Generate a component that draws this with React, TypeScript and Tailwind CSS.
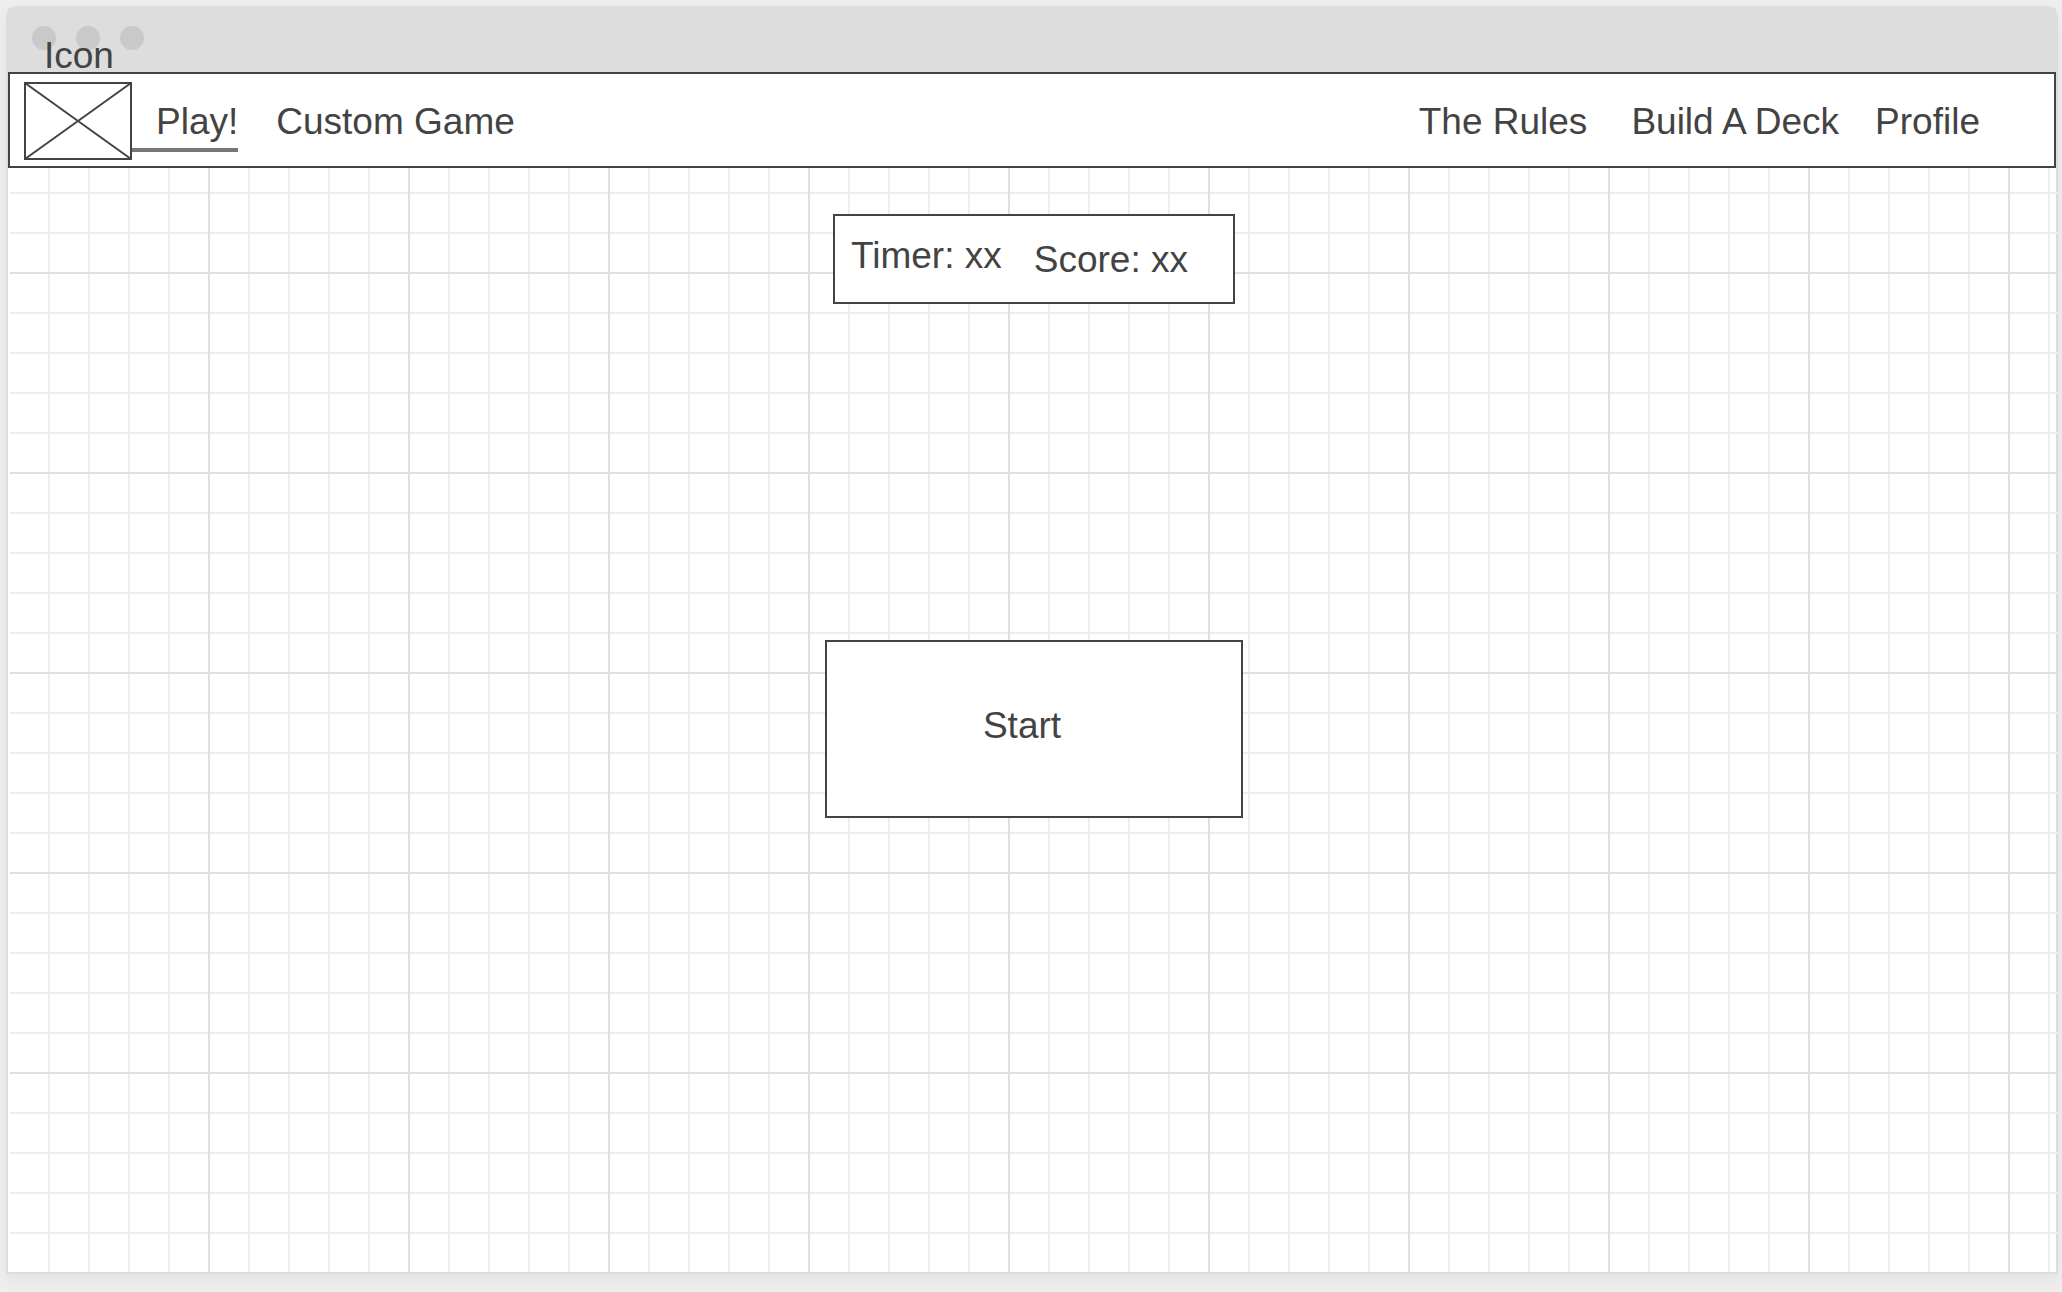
const linkText = "pt-5 leading-10";

function TitleBar() {
  return (
    <div className="relative flex h-16 shrink-0 gap-5 bg-[#dddddd] pl-6 pt-[18px]">
      <span className="size-6 rounded-full bg-[#c9c9c9]" />
      <span className="size-6 rounded-full bg-[#c9c9c9]" />
      <span className="size-6 rounded-full bg-[#c9c9c9]" />
      <span className="absolute -bottom-1 left-9 leading-10">Icon</span>
    </div>
  );
}

function ImagePlaceholder() {
  return (
    <svg
      className="h-[78px] w-[108px] shrink-0"
      viewBox="0 0 108 78"
      fill="none"
      stroke="#434343"
      strokeWidth="2"
      role="img"
      aria-label="Icon"
    >
      <rect x="1" y="1" width="106" height="76" />
      <path d="M1 1L107 77M107 1L1 77" />
    </svg>
  );
}

function NavBar() {
  return (
    <nav className="flex shrink-0 items-start justify-between border-2 border-[#434343] bg-white pb-1.5 pl-3.5 pr-[74px] pt-2">
      <div className="flex items-start">
        <ImagePlaceholder />
        <a href="#play" className="border-b-4 border-[#777777] pb-1.5 pl-6 pt-5 leading-10">
          Play!
        </a>
        <a href="#custom" className={`ml-[38px] ${linkText}`}>
          Custom Game
        </a>
      </div>
      <div className="flex items-start">
        <a href="#rules" className={linkText}>
          The Rules
        </a>
        <a href="#deck" className={`ml-11 ${linkText}`}>
          Build A Deck
        </a>
        <a href="#profile" className={`ml-9 ${linkText}`}>
          Profile
        </a>
      </div>
    </nav>
  );
}

export default function App() {
  return (
    <div className="flex min-h-screen flex-col bg-[#eeeeee] pb-[18px] pl-1.5 pr-1 pt-1.5 font-['Liberation_Sans',Arial,sans-serif] text-[37px] text-[#434343]">
      <div className="flex grow flex-col rounded-t-xl border-2 border-[#dddddd] bg-white shadow-[0_6px_16px_rgba(0,0,0,0.05)]">
        <TitleBar />
        <NavBar />
        <main className="-mr-0.5 ml-0.5 flex grow flex-col items-center bg-[linear-gradient(to_right,#e0e0e0_2px,transparent_2px),linear-gradient(to_bottom,#e0e0e0_2px,transparent_2px),linear-gradient(to_right,#eeeeee_2px,transparent_2px),linear-gradient(to_bottom,#eeeeee_2px,transparent_2px)] bg-[size:200px_200px,200px_200px,40px_40px,40px_40px] bg-[position:198px_0px,0px_104px,38px_0px,0px_24px] pt-[46px]">
          <section className="flex h-[90px] w-[402px] items-start gap-8 border-2 border-[#434343] bg-white pl-4 pt-5 leading-10">
            <p>Timer: xx</p>
            <p className="pt-1">Score: xx</p>
          </section>
          <button
            type="button"
            className="mt-[336px] h-[178px] w-[418px] border-2 border-[#434343] bg-white pb-1.5 pr-6 leading-10"
          >
            Start
          </button>
        </main>
      </div>
    </div>
  );
}
